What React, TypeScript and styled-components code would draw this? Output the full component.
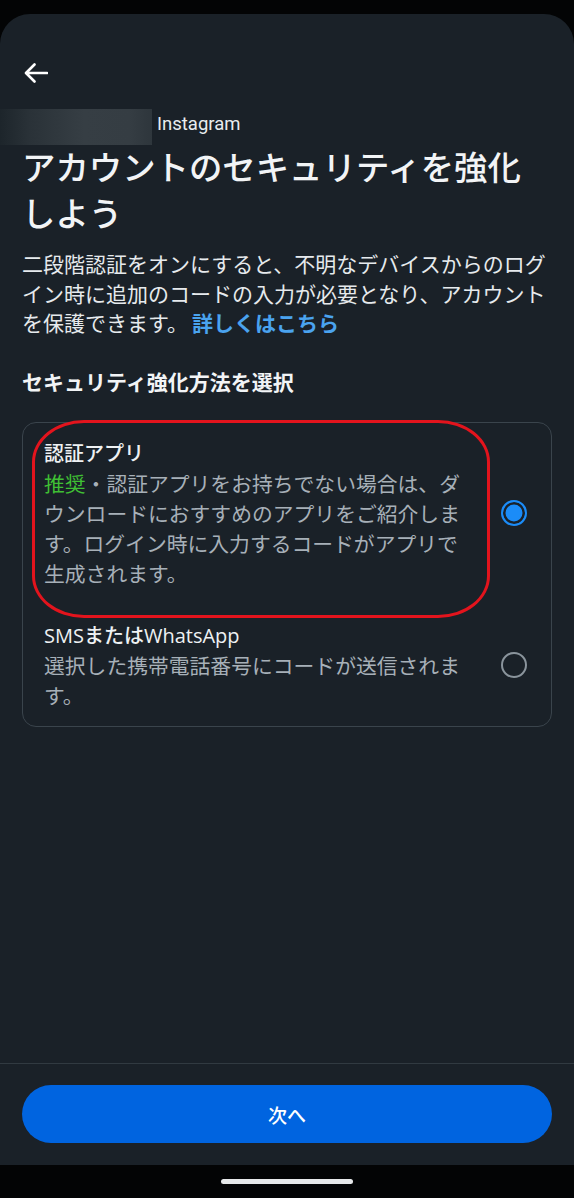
import React, { useState } from "react";
import styled, { createGlobalStyle } from "styled-components";

const GlobalStyle = createGlobalStyle`
  html, body {
    margin: 0;
    padding: 0;
    background: #030405;
  }
  body {
    font-family: Roboto, "Noto Sans CJK JP", sans-serif;
    -webkit-font-smoothing: antialiased;
  }
`;

type Method = {
  id: string;
  title: string;
  badge?: string;
  desc: string;
};

const methods: Method[] = [
  {
    id: "app",
    title: "認証アプリ",
    badge: "推奨",
    desc: "認証アプリをお持ちでない場合は、ダウンロードにおすすめのアプリをご紹介します。ログイン時に入力するコードがアプリで生成されます。",
  },
  {
    id: "sms",
    title: "SMSまたはWhatsApp",
    desc: "選択した携帯電話番号にコードが送信されます。",
  },
];

function App() {
  const [selected, setSelected] = useState("app");

  return (
    <>
      <GlobalStyle />
      <Screen>
        <StatusStrip />
        <Panel>
          <Content>
            <BackButton aria-label="戻る">
              <svg width="24" height="20" viewBox="0 0 24 20" fill="none">
                <path
                  d="M10.5 1.5 2 10l8.5 8.5M2.5 10H23"
                  stroke="#fff"
                  strokeWidth="2.6"
                  strokeLinecap="round"
                  strokeLinejoin="round"
                />
              </svg>
            </BackButton>

            <AccountRow>
              <BlurredName />
              <AppName>Instagram</AppName>
            </AccountRow>

            <Title>アカウントのセキュリティを強化しよう</Title>
            <Lead>
              二段階認証をオンにすると、不明なデバイスからのログイン時に追加のコードの入力が必要となり、アカウントを保護できます。
              <LearnMore href="#">詳しくはこちら</LearnMore>
            </Lead>

            <SectionTitle>セキュリティ強化方法を選択</SectionTitle>

            <OptionCard>
              {methods.map((m) => (
                <OptionRow key={m.id} onClick={() => setSelected(m.id)}>
                  <OptionText>
                    <OptionTitle>{m.title}</OptionTitle>
                    <OptionDesc>
                      {m.badge && (
                        <>
                          <Badge>{m.badge}</Badge>・
                        </>
                      )}
                      {m.desc}
                    </OptionDesc>
                  </OptionText>
                  <Radio $checked={selected === m.id} />
                </OptionRow>
              ))}
              <Highlight />
            </OptionCard>
          </Content>

          <Footer>
            <NextButton>次へ</NextButton>
          </Footer>
        </Panel>
        <NavBar>
          <HomeIndicator />
        </NavBar>
      </Screen>
    </>
  );
}

const Screen = styled.div`
  width: 574px;
  height: 1198px;
  display: flex;
  flex-direction: column;
  background: #030405;
  overflow: hidden;
`;

const StatusStrip = styled.div`
  height: 14px;
  flex-shrink: 0;
`;

const Panel = styled.div`
  flex: 1;
  display: flex;
  flex-direction: column;
  background: #1a2128;
  border-radius: 30px 30px 0 0;
`;

const Content = styled.div`
  flex: 1;
  padding: 0 22px;
  display: flex;
  flex-direction: column;
`;

const BackButton = styled.button`
  margin-top: 47px;
  width: 28px;
  height: 24px;
  padding: 0;
  border: none;
  background: none;
  display: flex;
  align-items: center;
  justify-content: flex-start;
  margin-left: 2px;
  cursor: pointer;
`;

const AccountRow = styled.div`
  margin-top: 24px;
  margin-left: -22px;
  display: flex;
  align-items: center;
  gap: 5px;
`;

const BlurredName = styled.div`
  width: 152px;
  height: 36px;
  background: linear-gradient(
    90deg,
    #1d252b 0%,
    #2a3238 20%,
    #363e44 55%,
    #353d43 85%,
    #2e363c 100%
  );
`;

const AppName = styled.span`
  color: #e8ecef;
  font-size: 18.5px;
  margin-top: -6px;
`;

const Title = styled.h1`
  margin: -2px 0 0;
  padding-right: 14px;
  color: #f2f4f6;
  font-family: "Noto Sans CJK JP", sans-serif;
  font-size: 33.4px;
  font-weight: 500;
  line-height: 46px;
`;

const Lead = styled.p`
  margin: 14px 0 0;
  color: #e6eaed;
  font-family: "Noto Sans CJK JP", sans-serif;
  font-size: 21px;
  line-height: 29.5px;
`;

const LearnMore = styled.a`
  color: #4aa3ef;
  font-weight: 700;
  text-decoration: none;
  margin-left: 4px;
`;

const SectionTitle = styled.h2`
  margin: 28px 0 0;
  color: #f2f4f6;
  font-family: "Noto Sans CJK JP", sans-serif;
  font-size: 21px;
  font-weight: 700;
  line-height: 30px;
`;

const OptionCard = styled.div`
  position: relative;
  margin-top: 26px;
  border: 1px solid #3a444c;
  border-radius: 14px;
  padding: 8px 0 8px;
  display: flex;
  flex-direction: column;
  gap: 17px;
`;

const OptionRow = styled.div`
  display: flex;
  align-items: center;
  padding: 8px 24px 8px 21px;
  gap: 23px;
  cursor: pointer;
`;

const OptionText = styled.div`
  flex: 1;
`;

const OptionTitle = styled.div`
  color: #eef1f3;
  font-family: "Open Sans", "Noto Sans CJK JP", sans-serif;
  font-size: 20px;
  font-weight: 500;
  line-height: 29px;
`;

const OptionDesc = styled.div`
  color: #a7b0b8;
  font-family: "Noto Sans CJK JP", sans-serif;
  font-size: 20.8px;
  line-height: 30px;
`;

const Badge = styled.span`
  color: #3fbf34;
`;

const Radio = styled.span<{ $checked: boolean }>`
  flex-shrink: 0;
  width: 26px;
  height: 26px;
  box-sizing: border-box;
  border-radius: 50%;
  border: 2.5px solid ${(p) => (p.$checked ? "#1b8cf8" : "#8a949c")};
  background: ${(p) => (p.$checked ? "#1b8cf8" : "transparent")};
  box-shadow: ${(p) => (p.$checked ? "inset 0 0 0 2.5px #1a2128" : "none")};
`;

const Highlight = styled.div`
  position: absolute;
  left: 9px;
  top: -3px;
  width: 458px;
  height: 198px;
  box-sizing: border-box;
  border: 3px solid #e3141d;
  border-radius: 52px / 42px;
  pointer-events: none;
`;

const Footer = styled.div`
  border-top: 1px solid #313a41;
  padding: 21px 22px 22px;
`;

const NextButton = styled.button`
  width: 100%;
  height: 58px;
  border: none;
  border-radius: 29px;
  background: #0064e0;
  color: #fff;
  font-family: "Noto Sans CJK JP", sans-serif;
  font-size: 19px;
  font-weight: 500;
  cursor: pointer;
`;

const NavBar = styled.div`
  height: 33px;
  flex-shrink: 0;
  display: flex;
  justify-content: center;
  align-items: center;
  background: #030405;
`;

const HomeIndicator = styled.div`
  width: 132px;
  height: 5px;
  border-radius: 3px;
  background: #e6e8ea;
`;

export default App;
